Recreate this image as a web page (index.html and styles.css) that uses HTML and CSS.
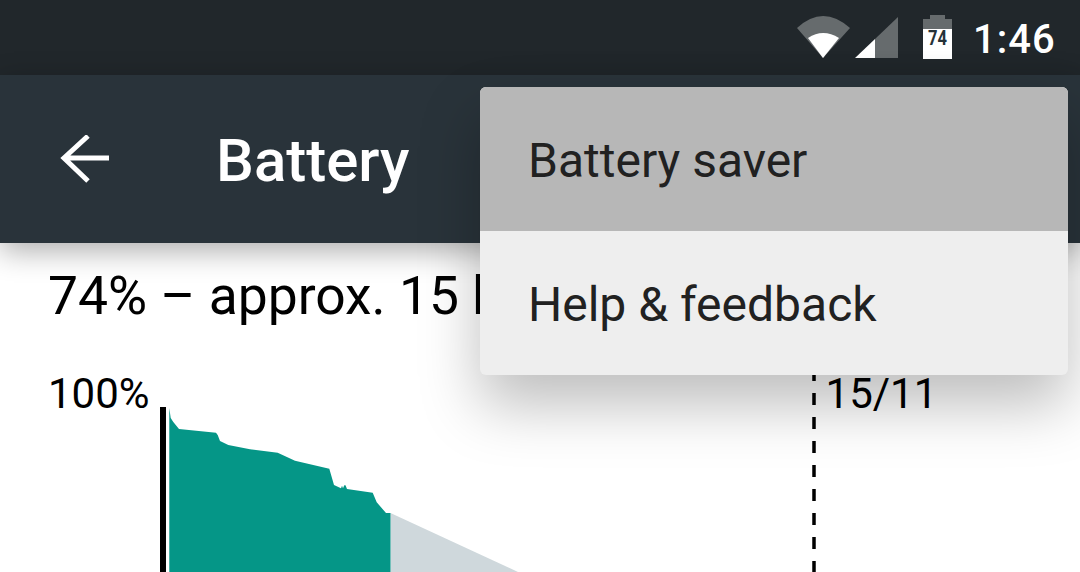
FILE: index.html
```html
<!DOCTYPE html>
<html lang="en">
<head>
<meta charset="utf-8">
<title>Battery</title>
<link rel="stylesheet" href="styles.css">
</head>
<body>
<div class="screen">
  <header class="status-bar">
    <svg class="status-icons" width="102" height="44" viewBox="0 0 102 44">
      <path class="dim" d="M1 13Q27-11 54 13L27 43Z"/>
      <path class="lit" d="M12 23Q27 13 43 23L27 43Z"/>
      <path class="dim" d="M79 24L102 2V43H79Z"/>
      <path class="lit" d="M59 43L79 24V43Z"/>
    </svg>
    <svg class="battery" width="29" height="44" viewBox="0 0 29 44">
      <path class="dim" d="M7 0H22V4H29V14H0V4H7Z"/>
      <rect class="lit" y="14" width="29" height="30"/>
      <text class="battery-level" x="14.500" y="30" text-anchor="middle" textLength="19" lengthAdjust="spacingAndGlyphs">74</text>
    </svg>
    <span class="clock">1:46</span>
  </header>
  <div class="app-bar">
    <svg class="back" width="50" height="48" viewBox="0 0 50 48">
      <path d="M49 23H4M28 1L4 23L28 46"/>
    </svg>
    <h1 class="title">Battery</h1>
  </div>
  <main class="content">
    <p class="summary">74% – approx. 15 hrs left</p>
    <div class="chart-head">
      <span>100%</span>
      <span class="date">15/11</span>
    </div>
    <svg class="chart" width="1080" height="200" viewBox="0 372 1080 200">
      <rect class="axis" x="160" y="407" width="6" height="165"/>
      <path class="projection" d="M390.500 513L518 572H390.500Z"/>
      <path class="usage" d="M169.300 408L170.700 418L173.300 422L179 429L216 432.700L217.700 435L220 441L228.300 445L250 449.300L277.700 452.700L295 460.700L329.300 468.700L334 485L341 488.300L342 485.700L343 488.300L344.300 485.300L345.500 485.300L347 489L372.700 492.700L376.700 502.300L386 513H390.500V572H169.300Z"/>
      <line class="dashes" x1="814" y1="369" x2="814" y2="572"/>
    </svg>
  </main>
  <ul class="menu">
    <li class="menu-item pressed">Battery saver</li>
    <li class="menu-item">Help &amp; feedback</li>
  </ul>
</div>
</body>
</html>
```
FILE: styles.css
```css
* { box-sizing: border-box; }
html, body { margin: 0; padding: 0; }
body { background: #fff; font-family: Roboto, "Liberation Sans", sans-serif; }
.screen { position: relative; width: 1080px; height: 572px; overflow: hidden; background: #fff; }
.status-bar { display: flex; align-items: flex-start; height: 75px; padding: 15px 25px 0 796px; background: #21272b; }
.status-icons { flex: none; }
.battery { flex: none; margin-left: 25px; }
.dim { fill: #666b6d; }
.lit { fill: #fff; }
.battery-level { font: 700 21px Roboto, sans-serif; fill: #263238; }
.clock { margin: 1px 0 0 21px; color: #fff; font-size: 40px; font-weight: 500; line-height: 48px; letter-spacing: 1px; }
.app-bar { position: relative; z-index: 1; display: flex; align-items: center; height: 168px; padding-left: 60px; background: #29333a; box-shadow: 0 8px 28px rgba(0,0,0,.32); }
.back { flex: none; fill: none; stroke: #fff; stroke-width: 5; }
.title { margin: 4px 0 0 106px; color: #fff; font-size: 60px; font-weight: 500; line-height: 1; }
.content { display: flex; flex-direction: column; padding-left: 48px; }
.summary { margin: 23px 0 0; color: #000; font-size: 53.400px; line-height: 60px; white-space: nowrap; }
.chart-head { display: flex; margin-top: 44px; color: #000; font-size: 42px; line-height: 48px; }
.date { margin-left: 676px; }
.chart { position: absolute; left: 0; top: 372px; }
.axis { fill: #000; }
.usage { fill: #059687; }
.projection { fill: #cfd8dc; }
.dashes { stroke: #000; stroke-width: 3.500; stroke-dasharray: 12 12; }
.menu { position: absolute; z-index: 2; left: 480px; top: 87px; width: 588px; margin: 0; padding: 0; list-style: none; border-radius: 6px; background: #eee; box-shadow: 0 30px 60px rgba(0,0,0,.26); }
.menu-item { display: flex; align-items: center; height: 144px; padding: 2px 0 0 48px; color: #212121; font-size: 48px; }
.menu-item.pressed { border-radius: 6px 6px 0 0; background: #b7b7b7; }
```
